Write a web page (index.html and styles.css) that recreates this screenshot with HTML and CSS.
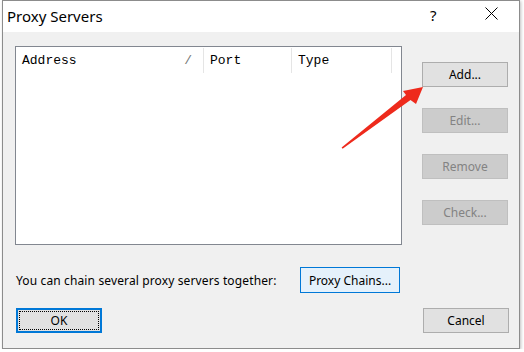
FILE: index.html
```html
<!DOCTYPE html>
<html lang="en">
<head>
    <meta charset="UTF-8">
    <title>Proxy Servers</title>
    <link rel="stylesheet" href="styles.css">
</head>
<body>
<div class="window">
    <div class="titlebar">
        <span class="title">Proxy Servers</span>
        <span class="help">?</span>
        <span class="close">
            <svg width="13" height="13" viewBox="0 0 13 13"><path d="M0.5 0.5 L12.5 12.5 M12.5 0.5 L0.5 12.5" stroke="#000" stroke-width="1" fill="none"/></svg>
        </span>
    </div>
    <div class="content">
        <div class="main">
            <div class="list">
                <div class="listhead">
                    <div class="col col-addr">Address<span class="sort">/</span></div>
                    <div class="col col-port">Port</div>
                    <div class="col col-type">Type</div>
                </div>
            </div>
            <div class="side">
                <span class="btn">Add...</span>
                <span class="btn off">Edit...</span>
                <span class="btn off">Remove</span>
                <span class="btn off">Check...</span>
            </div>
        </div>
        <div class="chain">
            <span class="note">You can chain several proxy servers together:</span>
            <span class="btn hot">Proxy Chains...</span>
        </div>
        <div class="footer">
            <span class="btn def"><span class="focus">OK</span></span>
            <span class="btn">Cancel</span>
        </div>
    </div>
    <svg class="arrow" width="524" height="352" viewBox="0 0 524 352">
        <polygon points="423,87 416,104 410.5,100 342.6,148.8 341.6,147.4 406,95 403,91" fill="#ee2a1c"/>
    </svg>
</div>
</body>
</html>
```

FILE: styles.css
```css
* {
    margin: 0;
    padding: 0;
    box-sizing: border-box;
}
body {
    background: #fff;
    font-family: "Noto Sans", "Liberation Sans", sans-serif;
    font-size: 12px;
    color: #000;
}
.window {
    width: 518px;
    height: 349px;
    margin: 0 0 0 2px;
    border: 1px solid #8c8c8c;
    background: #f0f0f0;
    box-shadow: 1px 1px 3px rgba(0, 0, 0, .25);
}
.titlebar {
    height: 31px;
    background: #fff;
    display: flex;
    align-items: center;
    padding-left: 4px;
}
.title {
    font-size: 15px;
    flex: 1;
    margin-top: -1px;
}
.help {
    font-size: 15px;
    width: 12px;
    margin-right: 43px;
    margin-top: -3px;
}
.close {
    width: 13px;
    height: 13px;
    margin-right: 21px;
    margin-top: -6px;
    display: block;
}
.close svg {
    display: block;
}
.content {
    padding: 14px 10px 0 12px;
}
.main {
    display: grid;
    grid-template-columns: 387px 86px;
    column-gap: 20px;
}
.list {
    height: 199px;
    background: #fff;
    border: 1px solid #828790;
}
.listhead {
    display: flex;
    height: 26px;
    font-family: "Liberation Mono", monospace;
    font-size: 13px;
}
.col {
    position: relative;
    padding: 5px 0 0 6px;
    border-right: 1px solid #e5e5e5;
    margin: 1px 0 0;
}
.col-addr {
    width: 188px;
}
.col-port {
    width: 88px;
}
.col-type {
    width: 100px;
}
.sort {
    color: #777;
    position: absolute;
    right: 11px;
    top: 5px;
}
.side {
    display: flex;
    flex-direction: column;
    gap: 21px;
    padding-top: 16px;
}
.btn {
    display: flex;
    align-items: center;
    justify-content: center;
    height: 25px;
    width: 86px;
    background: #e1e1e1;
    border: 1px solid #adadad;
}
.btn.off {
    background: #cccccc;
    border-color: #bfbfbf;
    color: #838383;
}
.chain {
    display: flex;
    align-items: center;
    margin-top: 22px;
    padding-left: 1px;
}
.note {
    width: 284px;
    letter-spacing: 0.13px;
}
.btn.hot {
    width: 100px;
    height: 26px;
    background: #e5f1fb;
    border-color: #0078d7;
}
.footer {
    display: flex;
    justify-content: space-between;
    margin-top: 15px;
    padding-left: 1px;
}
.btn.def {
    border: 2px solid #0078d7;
    padding: 1px;
}
.focus {
    display: flex;
    align-items: center;
    justify-content: center;
    width: 100%;
    height: 100%;
    border: 1px dotted #000;
}
.arrow {
    position: absolute;
    left: 0;
    top: 0;
    pointer-events: none;
}
```
